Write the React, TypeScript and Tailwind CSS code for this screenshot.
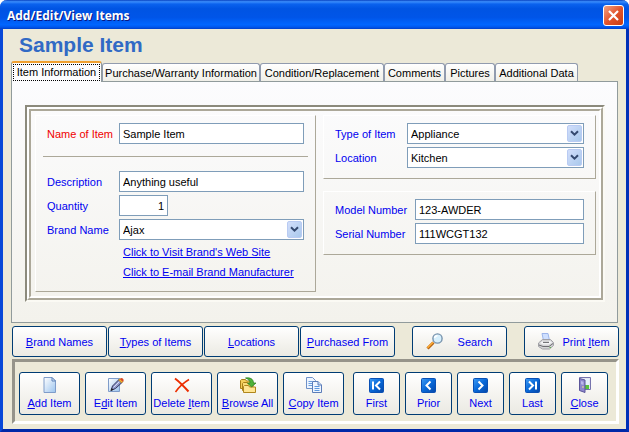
import type { ReactNode } from "react";

type TabProps = { children: ReactNode; active?: boolean; className?: string };

function Tab({ children, active, className = "" }: TabProps) {
  return active ? (
    <button
      type="button"
      role="tab"
      aria-selected="true"
      className="relative z-10 -mb-px h-[21px] w-[91px] shrink-0 rounded-t-[3px] border-x border-t-2 border-x-[#919b9c] border-t-[#f0a030] bg-[#fcfcfe] px-px text-black"
    >
      <span className="flex h-[17px] items-center justify-center border border-dotted border-black pb-[2px] whitespace-nowrap">
        {children}
      </span>
    </button>
  ) : (
    <button
      type="button"
      role="tab"
      aria-selected="false"
      className={
        "h-[18px] shrink-0 rounded-t-[3px] border border-b-0 border-[#919bae] bg-linear-to-b from-white to-[#f0efe8] text-center whitespace-nowrap text-black " +
        className
      }
    >
      {children}
    </button>
  );
}

function Field({
  id,
  label,
  value,
  labelClass,
  inputClass = "flex-1",
  color = "text-[#0000f0]",
}: {
  id: string;
  label: string;
  value: string;
  labelClass: string;
  inputClass?: string;
  color?: string;
}) {
  return (
    <div className="flex h-[21px] items-center">
      <label htmlFor={id} className={`shrink-0 whitespace-nowrap ${color} ${labelClass}`}>
        {label}
      </label>
      <input
        id={id}
        defaultValue={value}
        className={`h-[21px] min-w-0 rounded-none border border-[#7f9db9] bg-white px-[3px] text-black outline-none ${inputClass}`}
      />
    </div>
  );
}

function Dropdown({
  id,
  label,
  value,
  labelClass,
}: {
  id: string;
  label: string;
  value: string;
  labelClass: string;
}) {
  return (
    <div className="flex h-[21px] items-center">
      <label htmlFor={id} className={`shrink-0 whitespace-nowrap text-[#0000f0] ${labelClass}`}>
        {label}
      </label>
      <div className="relative h-[21px] min-w-0 flex-1">
        <select
          id={id}
          defaultValue={value}
          className="h-[21px] w-full appearance-none rounded-none border border-[#7f9db9] bg-white px-[3px] text-black outline-none"
        >
          <option>{value}</option>
        </select>
        <span className="pointer-events-none absolute top-[2px] right-[2px] flex h-[17px] w-[15px] items-center justify-center rounded-[2px] border border-[#b9cbf3] bg-linear-to-br from-[#d2defb] to-[#a9c9ec]">
          <svg width="9" height="7" viewBox="0 0 9 7" fill="none" stroke="#34496f" strokeWidth="2">
            <path d="M1 1.2 4.5 4.7 8 1.2" />
          </svg>
        </span>
      </div>
    </div>
  );
}

const frame =
  "rounded-[3px] border border-[#003c74] bg-linear-to-b from-white via-[#f5f4f0] to-[#ebeae3] text-[#0000f0] whitespace-nowrap";

function WideButton({ children, icon }: { children: ReactNode; icon?: ReactNode }) {
  return (
    <button type="button" className={`flex h-[31px] w-[95px] shrink-0 items-center ${frame}`}>
      {icon && <span className="ml-[13px] shrink-0">{icon}</span>}
      <span className="flex-1 text-center">{children}</span>
    </button>
  );
}

function ToolButton({ children, icon, narrow }: { children: ReactNode; icon: ReactNode; narrow?: boolean }) {
  return (
    <button
      type="button"
      className={`flex h-[43px] shrink-0 flex-col items-center justify-between pt-1 pb-1 ${
        narrow ? "w-[47px]" : "w-[61px]"
      } ${frame}`}
    >
      {icon}
      <span className="leading-[14px]">{children}</span>
    </button>
  );
}

const Page = () => (
  <>
    <defs>
      <linearGradient id="paper" x1="0" y1="0" x2="1" y2="1">
        <stop offset="0" stopColor="#ffffff" />
        <stop offset="1" stopColor="#9cc4ee" />
      </linearGradient>
    </defs>
    <path d="M2 .5h8l3.500 3.500v11.500H2z" fill="url(#paper)" stroke="#7f9cc9" />
    <path d="M10 .5v3.500h3.500z" fill="#dcebfb" stroke="#5f82b8" />
  </>
);

const AddIcon = () => (
  <svg width="16" height="16" viewBox="0 0 16 16">
    <Page />
  </svg>
);

const EditIcon = () => (
  <svg width="18" height="16" viewBox="0 0 18 16">
    <path d="M1.500 1.500h11v13h-11z" fill="url(#paper)" stroke="#7f9cc9" />
    <path d="M4 13.500 5.500 9 12 2.500l3 3L8.500 11.500z" fill="#8d96c8" stroke="#34375c" />
    <path d="m6.500 10.500 6-6" stroke="#d7dcf5" />
    <path d="m11.500 3 1.500-1.500 3 3-1.500 1.500z" fill="#f5b52d" stroke="#9c6414" strokeWidth=".6" />
    <path d="M13.500 1.500c1-1.500 4 .5 3 2.500l-.8.700-2.800-2.700z" fill="#d94a25" />
    <path d="m3.500 14 1.200-3 1.800 1.800z" fill="#222" />
  </svg>
);

const DeleteIcon = () => (
  <svg width="18" height="16" viewBox="0 0 18 16" fill="none" stroke="#ec2d00">
    <path d="M2 1.500c4 3 8.500 7.500 13.500 13" strokeWidth="2" />
    <path d="M16 2.500C11 5.500 6 10 2.500 15" strokeWidth="1.500" />
  </svg>
);

const BrowseIcon = () => (
  <svg width="18" height="16" viewBox="0 0 18 16">
    <path d="M1.500 11.500v-8l1-1h4l1 1.500H12v7.500z" fill="#f4ce5a" stroke="#a98018" />
    <path d="M3.500 13.500v-7l1-1h4l1 1.500H14v6.500z" fill="#f9dc78" stroke="#a98018" />
    <path d="M4.500 15.500v-6l1-1h4l1 1.500h6v5.500z" fill="#ffe592" stroke="#b0861c" />
    <path d="M6.500 1C11 .2 14.500 2 14.500 6H17l-4.500 4L8.500 6H11c0-2.500-1.500-3.800-4.500-5z" fill="#4fb23a" stroke="#247a1c" strokeWidth=".7" />
  </svg>
);

const CopyIcon = () => (
  <svg width="16" height="16" viewBox="0 0 16 16">
    <path d="M.5.5h6l3 3v8h-9z" fill="#eef5ff" stroke="#6f91c8" />
    <path d="M2.500 4.500h4m-4 2h5m-5 2h5" stroke="#6a9fe0" />
    <path d="M6.500 4.500h5.500l3.500 3.500v7.500h-9z" fill="#eef5ff" stroke="#5c7db8" />
    <path d="M12 4.500V8h3.500" fill="#c4dcf8" stroke="#5c7db8" />
    <path d="M8.500 9.500h5m-5 2h5m-5 2h5" stroke="#5c97de" />
  </svg>
);

const NavIcon = ({ d }: { d: string }) => (
  <svg width="15" height="16" viewBox="0 0 15 16">
    <defs>
      <linearGradient id="nav" x1="0" y1="0" x2="1" y2="1">
        <stop offset="0" stopColor="#3f9cf5" />
        <stop offset=".5" stopColor="#0868d8" />
        <stop offset="1" stopColor="#0446a8" />
      </linearGradient>
    </defs>
    <rect x=".5" y="1.500" width="14" height="14" rx="1" fill="url(#nav)" stroke="#0a50b4" />
    <path d={d} fill="none" stroke="#fff" strokeWidth="2" />
  </svg>
);

const CloseIcon = () => (
  <svg width="16" height="16" viewBox="0 0 16 16">
    <path d="M2.500.5h11v12h-11z" fill="#e4e6f2" stroke="#7774ad" />
    <path d="M8 2h4v6H8z" fill="#e6f1fc" />
    <path d="M8 8h4v4H8z" fill="#58c33c" />
    <path d="M2.500 1.500 8 3v12.500l-5.500-2z" fill="#8d87cc" stroke="#5c569a" />
    <path d="M4 4l2.500.7V8L4 7.300z" fill="#bcb8ea" />
    <path d="M6 9v2" stroke="#f2e28c" />
  </svg>
);

const SearchIcon = () => (
  <svg width="18" height="17" viewBox="0 0 18 17">
    <path d="m1.500 15.500 6-6" stroke="#b66412" strokeWidth="3" />
    <path d="m1.500 14.800 5.500-5.500" stroke="#ffad35" strokeWidth="1.600" />
    <circle cx="11.500" cy="5.500" r="4.600" fill="#d7f0fd" stroke="#7893ad" strokeWidth="1.400" />
    <path d="M8.500 5c.4-1.700 1.500-2.300 3-2.300" fill="none" stroke="#fff" strokeWidth="1.500" />
  </svg>
);

const PrintIcon = () => (
  <svg width="16" height="17" viewBox="0 0 16 17">
    <path d="M4 .5h6l1.500 7H5.500z" fill="#cfe0ff" stroke="#9db5ea" />
    <path d="m.5 10 4-3.500h8l3 3v3l-4 3.500h-7l-4-2.500z" fill="#d4d4d6" stroke="#a0a0a6" />
    <path d="m2 10 3-2h7l2 1.500-3 2H5z" fill="#f4f4f6" />
    <path d="m1 12 4 1.500h6l4-3" fill="none" stroke="#6d6d72" />
    <path d="M5 9.300h6" stroke="#55555a" />
    <path d="M11.500 14.500h1.500" stroke="#5cb944" />
  </svg>
);

const group = "border border-t-white border-l-white border-r-[#aca899] border-b-[#aca899]";

export default function App() {
  return (
    <main className="flex w-full flex-col rounded-t-[7px] border-x-[3px] border-b-[3px] border-[#0848d8] border-r-[#0030b8] border-b-[#0028a8] bg-[#ece9d8] font-['Liberation_Sans',Arial,sans-serif] text-[11px] leading-[14px]">
      <header className="-mx-[3px] flex h-[29px] items-center justify-between rounded-t-[7px] bg-[linear-gradient(to_bottom,#0842c0_0%,#3a8dfc_6%,#0a62ee_14%,#0054e3_30%,#0055e8_60%,#0066ff_85%,#0058ee_93%,#003fc8_100%)] pr-[5px] pl-[7px]">
        <h1 className="pt-[2px] font-['Open_Sans','Noto_Sans',sans-serif] text-[12px] font-bold text-white [text-shadow:1px_1px_#0a1883]">
          Add/Edit/View Items
        </h1>
        <button
          type="button"
          aria-label="Close window"
          className="mt-[2px] flex size-[21px] items-center justify-center rounded-[3px] border border-white bg-linear-to-br from-[#f0a080] via-[#e2542c] to-[#c93c10]"
        >
          <svg width="11" height="11" viewBox="0 0 11 11" stroke="#fff" strokeWidth="2.200">
            <path d="m1 1 9 9M10 1l-9 9" />
          </svg>
        </button>
      </header>

      <div className="pr-[7px] pb-[5px] pl-2">
        <h2 className="pt-1 pl-2 text-[21px] leading-6 font-bold text-[#316ac5]">Sample Item</h2>

        <div role="tablist" className="mt-1 flex items-end">
          <Tab active>Item Information</Tab>
          <Tab className="w-[158px]">Purchase/Warranty Information</Tab>
          <Tab className="w-[124px]">Condition/Replacement</Tab>
          <Tab className="w-[61px]">Comments</Tab>
          <Tab className="w-[50px]">Pictures</Tab>
          <Tab className="w-[83px]">Additional Data</Tab>
        </div>

        <section
          role="tabpanel"
          className="mr-px border border-[#919b9c] bg-linear-to-b from-[#fcfcfe] to-[#f3f2ec] pt-[23px] pr-3 pb-5 pl-[13px]"
        >
          <div className="border-2 border-t-[#8c8a7c] border-r-[#fbfaf4] border-b-[#fbfaf4] border-l-[#8c8a7c]">
            <div className="border-2 border-t-white border-r-[#aca899] border-b-[#aca899] border-l-white">
              <div className="grid grid-cols-[281fr_273fr] items-start gap-[7px] border-2 border-t-[#aca899] border-r-white border-b-white border-l-[#aca899] py-1 pr-[3px] pl-1">
                <div className={`flex min-w-0 flex-col px-[11px] pt-[7px] pb-3 ${group}`}>
                  <Field id="name" label="Name of Item" value="Sample Item" labelClass="w-[72px]" color="text-[#f00000]" />
                  <hr className="-mx-1 mt-3 mb-[14px] border-t border-[#aca899]" />
                  <div className="flex flex-col gap-[3px]">
                    <Field id="description" label="Description" value="Anything useful" labelClass="w-[72px]" />
                    <Field id="quantity" label="Quantity" value="1" labelClass="w-[72px]" inputClass="w-[49px] text-right" />
                    <Dropdown id="brand" label="Brand Name" value="Ajax" labelClass="w-[72px]" />
                  </div>
                  <div className="mt-[5px] ml-[76px] flex flex-col items-start gap-[6px] whitespace-nowrap text-[#0000f0] underline">
                    <a href="#brand-site">Click to Visit Brand's Web Site</a>
                    <a href="#brand-mail">Click to E-mail Brand Manufacturer</a>
                  </div>
                </div>
                <div className="flex min-w-0 flex-col gap-3">
                  <div className={`flex flex-col gap-[3px] px-[11px] pt-[7px] pb-[10px] ${group}`}>
                    <Dropdown id="type" label="Type of Item" value="Appliance" labelClass="w-[72px]" />
                    <Dropdown id="location" label="Location" value="Kitchen" labelClass="w-[72px]" />
                  </div>
                  <div className={`flex flex-col gap-[3px] px-[11px] pt-[7px] pb-[10px] ${group}`}>
                    <Field id="model" label="Model Number" value="123-AWDER" labelClass="w-[80px]" />
                    <Field id="serial" label="Serial Number" value="111WCGT132" labelClass="w-[80px]" />
                  </div>
                </div>
              </div>
            </div>
          </div>
        </section>

        <div className="mt-[3px] flex justify-between pl-px">
          <div className="flex gap-px">
            <WideButton><u>B</u>rand Names</WideButton>
            <WideButton><u>T</u>ypes of Items</WideButton>
            <WideButton><u>L</u>ocations</WideButton>
            <WideButton><u>P</u>urchased From</WideButton>
          </div>
          <div className="flex gap-[17px]">
            <WideButton icon={<SearchIcon />}>Search</WideButton>
            <WideButton icon={<PrintIcon />}>Print <u>I</u>tem</WideButton>
          </div>
        </div>

        <div
          role="toolbar"
          className="mt-[2px] ml-px flex justify-between border-[3px] border-t-[#96948a] border-r-white border-b-white border-l-[#96948a] pt-[10px] pr-2 pb-[6px] pl-1"
        >
          <div className="flex gap-[5px]">
            <ToolButton icon={<AddIcon />}><u>A</u>dd Item</ToolButton>
            <ToolButton icon={<EditIcon />}>E<u>d</u>it Item</ToolButton>
            <ToolButton icon={<DeleteIcon />}>Delete <u>I</u>tem</ToolButton>
            <ToolButton icon={<BrowseIcon />}><u>B</u>rowse All</ToolButton>
            <ToolButton icon={<CopyIcon />}><u>C</u>opy Item</ToolButton>
          </div>
          <div className="flex gap-[5px]">
            <ToolButton narrow icon={<NavIcon d="M4 4.500v8M11 4.500l-4 4 4 4" />}>First</ToolButton>
            <ToolButton narrow icon={<NavIcon d="m9.500 4.500-4 4 4 4" />}>Prior</ToolButton>
            <ToolButton narrow icon={<NavIcon d="m5.500 4.500 4 4-4 4" />}>Next</ToolButton>
            <ToolButton narrow icon={<NavIcon d="m4 4.500 4 4-4 4M11 4.500v8" />}>Last</ToolButton>
            <ToolButton narrow icon={<CloseIcon />}><u>C</u>lose</ToolButton>
          </div>
        </div>
      </div>
    </main>
  );
}
